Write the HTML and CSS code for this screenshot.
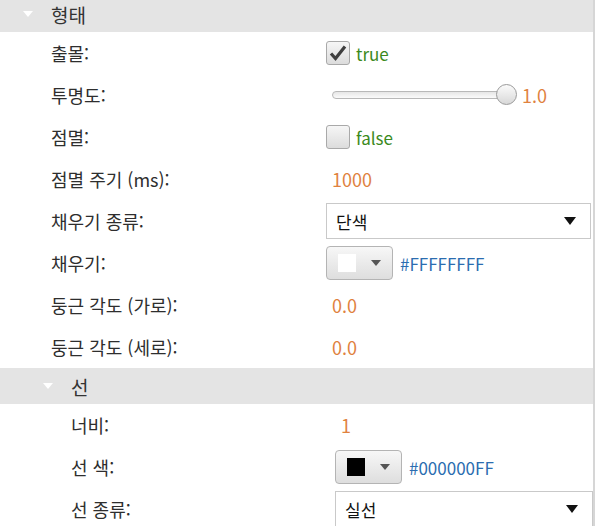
FILE: index.html
```html
<!DOCTYPE html>
<html lang="ko">

<head>
    <meta charset="UTF-8">
    <title>속성</title>
    <link rel="stylesheet" href="styles.css">
</head>

<body>

    <div class="sheet">

        <!-- 형태 -->
        <div class="group-head head-top">
            <span class="arrow"></span>
            <span class="group-title">형태</span>
        </div>
        <div class="rows rows-main">
            <div class="label">출몰:</div>
            <div class="value">
                <span class="check checked">
                    <svg width="18" height="16" viewBox="0 0 18 16">
                        <path d="M2 8.5 L6.5 13.5 L16 1.5" fill="none" stroke="#3f3f3f" stroke-width="3.2" />
                    </svg>
                </span>
                <span class="bool">true</span>
            </div>

            <div class="label">투명도:</div>
            <div class="value">
                <span class="slider"><span class="knob"></span></span>
                <span class="num">1.0</span>
            </div>

            <div class="label">점멸:</div>
            <div class="value">
                <span class="check"></span>
                <span class="bool">false</span>
            </div>

            <div class="label">점멸 주기 (ms):</div>
            <div class="value"><span class="num text-val">1000</span></div>

            <div class="label">채우기 종류:</div>
            <div class="value">
                <div class="combo"><span>단색</span><span class="combo-arrow"></span></div>
            </div>

            <div class="label">채우기:</div>
            <div class="value">
                <div class="picker"><span class="swatch white"></span><span class="picker-arrow"></span></div>
                <span class="hex">#FFFFFFFF</span>
            </div>

            <div class="label">둥근 각도 (가로):</div>
            <div class="value"><span class="num text-val">0.0</span></div>

            <div class="label">둥근 각도 (세로):</div>
            <div class="value"><span class="num text-val">0.0</span></div>
        </div>

        <!-- 선 -->
        <div class="group-head head-sub">
            <span class="arrow"></span>
            <span class="group-title">선</span>
        </div>
        <div class="rows rows-sub">
            <div class="label">너비:</div>
            <div class="value"><span class="num text-val">1</span></div>

            <div class="label">선 색:</div>
            <div class="value">
                <div class="picker"><span class="swatch black"></span><span class="picker-arrow"></span></div>
                <span class="hex">#000000FF</span>
            </div>

            <div class="label">선 종류:</div>
            <div class="value">
                <div class="combo"><span>실선</span><span class="combo-arrow"></span></div>
            </div>
        </div>

    </div>

</body>

</html>
```

FILE: styles.css
```css
body {
    margin: 0;
    background: #ffffff;
    font-family: "Noto Sans CJK KR", "Noto Sans", sans-serif;
    font-size: 17px;
    color: #333333;
    overflow: hidden;
}

.sheet {
    width: 593px;
    height: 530px;
    border-right: 2px solid #d6d6d6;
}

/* group header bands */
.group-head {
    display: flex;
    align-items: center;
    height: 36px;
    background-color: #e4e4e4;
}

.head-top {
    margin-top: -4px;
    padding-left: 23px;
}

.head-sub {
    padding-left: 43px;
}

.arrow {
    width: 0;
    height: 0;
    border-left: 5px solid transparent;
    border-right: 5px solid transparent;
    border-top: 6px solid #ffffff;
    margin-right: 18px;
}

.group-title {
    font-size: 19px;
    color: #333333;
}

/* property rows */
.rows {
    display: grid;
    grid-auto-rows: 42px;
}

.rows-main {
    grid-template-columns: 275px 1fr;
    padding-left: 51px;
    padding-right: 2px;
}

.rows-sub {
    grid-template-columns: 264px 1fr;
    padding-left: 71px;
}

.label,
.value {
    display: flex;
    align-items: center;
}

.label {
    font-size: 18px;
    color: #2e2e2e;
}

.value {
    gap: 6px;
}

.text-val {
    padding-left: 6px;
}

.num {
    font-size: 18px;
    color: #e0823f;
}

.bool {
    color: #3b8a1d;
}

.hex {
    color: #2b6db0;
    margin-left: 1px;
}

/* checkbox */
.check {
    width: 22px;
    height: 22px;
    border: 1px solid #a9a9a9;
    border-radius: 3px;
    background: linear-gradient(#f6f6f6, #dcdcdc);
    display: flex;
    align-items: center;
    justify-content: center;
}

/* slider */
.slider {
    position: relative;
    margin-left: 6px;
    width: 173px;
    height: 6px;
    border: 1px solid #b8b8b8;
    border-radius: 4px;
    background: linear-gradient(#e6e6e6, #fafafa);
    margin-right: 9px;
}

.knob {
    position: absolute;
    right: -11px;
    top: -8px;
    width: 19px;
    height: 19px;
    border: 1px solid #9a9a9a;
    border-radius: 50%;
    background: linear-gradient(#fbfbfb, #d8d8d8);
}

/* combo box */
.combo {
    flex: 1;
    height: 34px;
    border: 1px solid #c9c9c9;
    background: #ffffff;
    display: flex;
    align-items: center;
    justify-content: space-between;
    padding: 0 14px 0 9px;
    color: #111111;
}

.combo-arrow {
    width: 0;
    height: 0;
    border-left: 6px solid transparent;
    border-right: 6px solid transparent;
    border-top: 8px solid #111111;
}

/* colour picker button */
.picker {
    width: 54px;
    height: 32px;
    border: 1px solid #b4b4b4;
    border-radius: 4px;
    background: linear-gradient(#f7f7f7, #dedede);
    display: flex;
    align-items: center;
    padding-left: 11px;
}

.swatch {
    width: 18px;
    height: 18px;
}

.swatch.white {
    background: #ffffff;
}

.swatch.black {
    background: #000000;
}

.picker-arrow {
    margin-left: 15px;
    width: 0;
    height: 0;
    border-left: 5px solid transparent;
    border-right: 5px solid transparent;
    border-top: 6px solid #555555;
}
```
